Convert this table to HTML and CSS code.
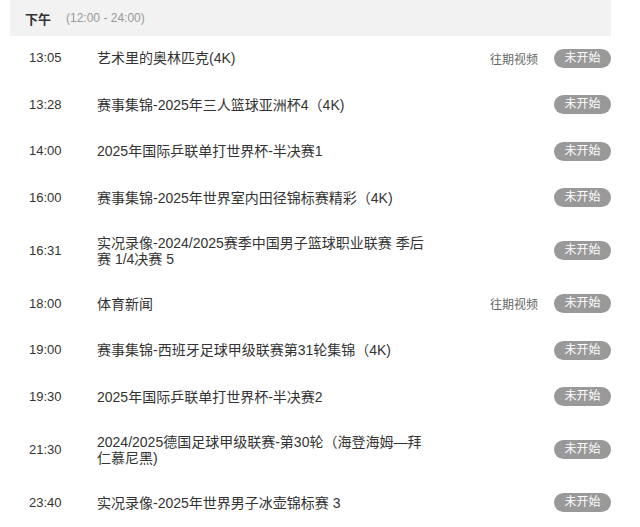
FILE: index.html
```html
<!DOCTYPE html>
<html lang="zh-CN">
<head>
<meta charset="utf-8">
<title>节目单</title>
<link rel="stylesheet" href="styles.css">
</head>
<body>
<div class="schedule">
  <div class="period">
    <span class="period-name">下午</span>
    <span class="period-range">(12:00 - 24:00)</span>
  </div>
  <ul class="list">
    <li class="item"><span class="time">13:05</span><span class="title">艺术里的奥林匹克(4K)</span><span class="replay">往期视频</span><span class="status">未开始</span></li>
    <li class="item"><span class="time">13:28</span><span class="title">赛事集锦-2025年三人篮球亚洲杯4（4K)</span><span class="replay"></span><span class="status">未开始</span></li>
    <li class="item"><span class="time">14:00</span><span class="title">2025年国际乒联单打世界杯-半决赛1</span><span class="replay"></span><span class="status">未开始</span></li>
    <li class="item"><span class="time">16:00</span><span class="title">赛事集锦-2025年世界室内田径锦标赛精彩（4K)</span><span class="replay"></span><span class="status">未开始</span></li>
    <li class="item"><span class="time">16:31</span><span class="title">实况录像-2024/2025赛季中国男子篮球职业联赛 季后赛 1/4决赛 5</span><span class="replay"></span><span class="status">未开始</span></li>
    <li class="item"><span class="time">18:00</span><span class="title">体育新闻</span><span class="replay">往期视频</span><span class="status">未开始</span></li>
    <li class="item"><span class="time">19:00</span><span class="title">赛事集锦-西班牙足球甲级联赛第31轮集锦（4K)</span><span class="replay"></span><span class="status">未开始</span></li>
    <li class="item"><span class="time">19:30</span><span class="title">2025年国际乒联单打世界杯-半决赛2</span><span class="replay"></span><span class="status">未开始</span></li>
    <li class="item"><span class="time">21:30</span><span class="title">2024/2025德国足球甲级联赛-第30轮（海登海姆—拜仁慕尼黑)</span><span class="replay"></span><span class="status">未开始</span></li>
    <li class="item"><span class="time">23:40</span><span class="title">实况录像-2025年世界男子冰壶锦标赛 3</span><span class="replay"></span><span class="status">未开始</span></li>
  </ul>
</div>
</body>
</html>
```

FILE: styles.css
```css
* { box-sizing: border-box; }
html, body {
  margin: 0;
  padding: 0;
  background: #fff;
}
body {
  font-family: "Liberation Sans", "Noto Sans CJK SC", sans-serif;
  color: #333;
  overflow: hidden;
}
.schedule {
  margin-left: 10px;
  width: 601px;
}
.period {
  height: 36px;
  background: #f2f2f2;
  display: flex;
  align-items: center;
  padding-left: 15px;
}
.period-name {
  font-size: 13px;
  font-weight: bold;
  color: #333;
}
.period-range {
  font-size: 12px;
  color: #999;
  margin-left: 15px;
}
.list {
  list-style: none;
  margin: 0;
  padding: 0;
}
.item {
  display: grid;
  grid-template-columns: 68px 328px 1fr auto;
  align-items: center;
  padding: 12.5px 0 15px 19px;
}
.time {
  font-size: 13px;
  color: #333;
  line-height: 16px;
}
.title {
  font-size: 14px;
  line-height: 16px;
  color: #333;
}
.replay {
  font-size: 12px;
  color: #666;
  text-align: right;
  padding-right: 16px;
}
.status {
  display: inline-block;
  width: 57px;
  height: 19px;
  line-height: 19px;
  border-radius: 10px;
  background: #999;
  color: #fff;
  font-size: 12px;
  text-align: center;
}
```
